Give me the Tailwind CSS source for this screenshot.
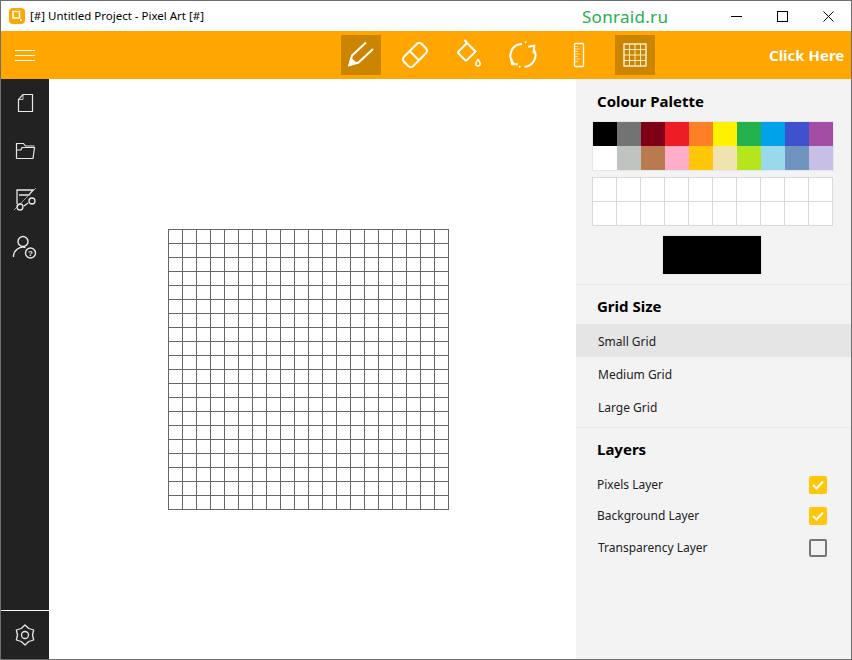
<!DOCTYPE html>
<html><head><meta charset="utf-8"><script src="https://cdn.jsdelivr.net/npm/@tailwindcss/browser@4"></script></head>
<body class="m-0 bg-white">
<div class="w-[852px] h-[660px] flex flex-col overflow-hidden border border-[#6e6e6e] font-['Noto_Sans','Open_Sans',sans-serif] text-[#222]">
  <!-- title bar -->
  <div class="h-[30px] shrink-0 flex items-center bg-white relative">
    <svg class="ml-[8px] w-[16px] h-[16px]" viewBox="0 0 16 16"><rect width="16" height="16" rx="4" fill="#ffa600"/><path d="M4 3.500h6.500v6.500H4z" fill="none" stroke="#fff" stroke-width="1.600"/><rect x="11" y="11" width="2" height="2" fill="#fff"/></svg>
    <span class="ml-[5px] text-[11.5px] text-black">[#] Untitled Project - Pixel Art [#]</span>
    <span class="ml-[378px] pt-[2px] text-[17px] text-[#22b14c] tracking-[0.3px]">Sonraid.ru</span>
    <div class="ml-auto flex h-full items-center">
      <div class="w-[46px] flex justify-center"><svg class="w-[11px] h-[11px]" viewBox="0 0 11 11"><path d="M0 5.500h11" stroke="#000"/></svg></div>
      <div class="w-[46px] flex justify-center"><svg class="w-[11px] h-[11px]" viewBox="0 0 11 11"><rect x=".5" y=".5" width="10" height="10" fill="none" stroke="#000"/></svg></div>
      <div class="w-[46px] flex justify-center"><svg class="w-[11px] h-[11px]" viewBox="0 0 11 11"><path d="M.5.5l10 10M10.500.5l-10 10" stroke="#000"/></svg></div>
    </div>
  </div>
  <!-- toolbar -->
  <div class="h-[48px] shrink-0 bg-[#ffa600] flex items-center relative">
    <svg class="ml-[14px] w-[20px] h-[11px]" viewBox="0 0 20 11"><path d="M0 .5h20M0 5.500h20M0 10.500h20" stroke="#fff"/></svg>
    <div class="ml-[306px] flex gap-[14.8px]">
      <div class="w-[40px] h-[40px] bg-[#cc8500]"><svg width="40" height="40" viewBox="0 0 40 40" fill="none" stroke="#fff" stroke-width="2"><path d="M25 7.500L11 20.500 8.500 30l9-2.500L32 14"/><path d="M8.500 30l1.500-6 4.500 3.800z" fill="#fff"/></svg></div>
      <div class="w-[40px] h-[40px]"><svg width="40" height="40" viewBox="0 0 40 40" fill="none" stroke="#fff" stroke-width="2"><g transform="translate(-1 0) rotate(-45 20 20)"><rect x="7.500" y="13.500" width="25" height="13" rx="3.500"/><path d="M19 13.500v13"/></g></svg></div>
      <div class="w-[40px] h-[40px]"><svg width="40" height="40" viewBox="0 0 40 40" fill="none" stroke="#fff" stroke-width="2"><g transform="translate(-1 0)"><path d="M14.500 5l2.500 3M17 8L8.500 16.500a1.500 1.500 0 000 2l6.500 6.500a1.500 1.500 0 002 0L25.500 16.500z"/><path d="M28 24.500c-1.500 2-2.200 3-2.200 4.200a2.200 2.200 0 004.400 0c0-1.200-.700-2.200-2.200-4.200z" stroke-width="1.500"/></g></svg></div>
      <div class="w-[40px] h-[40px]"><svg width="40" height="40" viewBox="0 0 40 40" fill="none" stroke="#fff" stroke-width="2"><path d="M17 9A11.500 11.500 0 009.600 29.300"/><path d="M28.600 14A11.500 11.500 0 0119.600 31.700"/><path d="M23.300 11.700l6-1 -.7 7.600M6.300 23.300l.7 6h6"/><circle cx="20.600" cy="7.300" r="1" fill="#fff" stroke="none"/><circle cx="14.600" cy="31.700" r="1" fill="#fff" stroke="none"/></svg></div>
      <div class="w-[40px] h-[40px]"><svg width="40" height="40" viewBox="0 0 40 40" fill="none" stroke="#fff"><rect x="14.500" y="8.500" width="9" height="23" rx="1" stroke-width="1.300"/><path d="M15 11.500h3M15 14h5M15 16.500h3M15 19h5M15 21.500h3M15 24h5M15 26.500h3" stroke-width=".8" opacity=".8"/></svg></div>
      <div class="w-[40px] h-[40px] bg-[#cc8500]"><svg width="40" height="40" viewBox="0 0 40 40" fill="none" stroke="#fff"><path d="M14.500 9v22M20 9v22M25.500 9v22M9 14.500h22M9 20h22M9 25.500h22" stroke="#ffe9bd" stroke-width="1"/><rect x="9" y="9" width="22" height="22" stroke-width="1.200"/></svg></div>
    </div>
    <span class="absolute left-[768px] top-[14px] whitespace-nowrap text-[15px] leading-[20px] font-bold text-white">Click Here</span>
  </div>
  <div class="flex-1 flex min-h-0">
    <!-- sidebar -->
    <div class="w-[48px] shrink-0 bg-[#222222] flex flex-col">
      <div class="h-[48px] flex items-center justify-center"><svg width="24" height="24" viewBox="0 0 24 24" fill="none" stroke="#e8e8e8" stroke-width="1.200"><path d="M10 3.500h9.500v17h-14V8.500z"/><path d="M10 3.500v5H5.500" stroke-width=".8"/></svg></div>
      <div class="h-[48px] flex items-center justify-center"><svg width="24" height="24" viewBox="0 0 24 24" fill="none" stroke="#e8e8e8" stroke-width="1.200"><path d="M3.500 19.500V4.500h7l2 2.500h9"/><path d="M3.500 19.500h16.500l1.500-11H9l-1 2.500H3.500"/></svg></div>
      <div class="h-[48px] flex items-center justify-center"><svg width="26" height="26" viewBox="0 0 26 26" fill="none" stroke="#e8e8e8" stroke-width="1.300"><path d="M5 18V4h16l-4 5H7"/><path d="M2 24L24 2" stroke="#c8b8c8" stroke-width=".8"/><circle cx="8" cy="21" r="3"/><circle cx="20" cy="15" r="3"/><path d="M12 20l4-3"/></svg></div>
      <div class="h-[48px] flex items-center justify-center"><svg width="26" height="26" viewBox="0 0 26 26" fill="none" stroke="#e8e8e8" stroke-width="1.400"><circle cx="11" cy="7.500" r="5"/><path d="M1.500 23a9.500 9.500 0 0112-9.500"/><circle cx="18.500" cy="19" r="5"/><text x="18.500" y="22" text-anchor="middle" font-size="8" font-weight="700" fill="#e8e8e8" stroke="none" font-family="Liberation Sans">?</text></svg></div>
      <div class="mt-auto h-[49px] border-t border-white flex items-center justify-center"><svg width="22" height="22" viewBox="0 0 22 22" fill="none" stroke="#e8e8e8" stroke-width="1.300" stroke-linejoin="round"><path d="M11 1L14.750 4.500 19.660 6 18.500 11 19.660 16 14.750 17.500 11 21 7.250 17.500 2.340 16 3.500 11 2.340 6 7.250 4.500z"/><circle cx="11" cy="11" r="3.500"/></svg></div>
    </div>
    <!-- canvas -->
    <div class="flex-1 bg-white relative">
      <div class="absolute left-[119px] top-[150px] w-[281px] h-[281px] bg-[linear-gradient(to_right,#666_1px,transparent_1px),linear-gradient(to_bottom,#666_1px,transparent_1px)] bg-[size:14px_14px]"></div>
    </div>
    <!-- right panel -->
    <div class="w-[275px] shrink-0 bg-[#f3f3f3] flex flex-col text-[12px]">
      <div class="h-[206px] border-b border-[#e6e6e6] relative shrink-0">
        <div class="pl-[21px] pt-[11px] text-[15px] leading-[22px] font-bold text-black">Colour Palette</div>
        <div class="ml-[16px] mt-[9px] w-[242px] border border-[#e6e6e6] grid grid-cols-[repeat(10,24px)] grid-rows-[repeat(2,24px)]">
          <div class="bg-[#000000]"></div><div class="bg-[#737373]"></div><div class="bg-[#7f0016]"></div><div class="bg-[#ee1c24]"></div><div class="bg-[#ff7f27]"></div><div class="bg-[#fff200]"></div><div class="bg-[#22b14c]"></div><div class="bg-[#00a2e8]"></div><div class="bg-[#3f51cc]"></div><div class="bg-[#a34ea4]"></div>
          <div class="bg-white"></div><div class="bg-[#bfc4c0]"></div><div class="bg-[#b97a50]"></div><div class="bg-[#ffaec9]"></div><div class="bg-[#ffc60a]"></div><div class="bg-[#efe4b0]"></div><div class="bg-[#b5e61d]"></div><div class="bg-[#99d9ea]"></div><div class="bg-[#7092be]"></div><div class="bg-[#c8bfe7]"></div>
        </div>
        <div class="ml-[16px] mt-[6px] w-[241px] h-[49px] grid grid-cols-[repeat(10,24px)] grid-rows-[repeat(2,24px)] border-l border-t border-[#d9d9d9] bg-white">
          <div class="border-r border-b border-[#d9d9d9]"></div><div class="border-r border-b border-[#d9d9d9]"></div><div class="border-r border-b border-[#d9d9d9]"></div><div class="border-r border-b border-[#d9d9d9]"></div><div class="border-r border-b border-[#d9d9d9]"></div><div class="border-r border-b border-[#d9d9d9]"></div><div class="border-r border-b border-[#d9d9d9]"></div><div class="border-r border-b border-[#d9d9d9]"></div><div class="border-r border-b border-[#d9d9d9]"></div><div class="border-r border-b border-[#d9d9d9]"></div>
          <div class="border-r border-b border-[#d9d9d9]"></div><div class="border-r border-b border-[#d9d9d9]"></div><div class="border-r border-b border-[#d9d9d9]"></div><div class="border-r border-b border-[#d9d9d9]"></div><div class="border-r border-b border-[#d9d9d9]"></div><div class="border-r border-b border-[#d9d9d9]"></div><div class="border-r border-b border-[#d9d9d9]"></div><div class="border-r border-b border-[#d9d9d9]"></div><div class="border-r border-b border-[#d9d9d9]"></div><div class="border-r border-b border-[#d9d9d9]"></div>
        </div>
        <div class="ml-[86px] mt-[9px] w-[100px] h-[40px] bg-black border border-[#e6e6e6]"></div>
      </div>
      <div class="h-[143px] border-b border-[#e6e6e6] shrink-0">
        <div class="pl-[21px] pt-[10px] h-[39px] text-[15px] leading-[22px] font-bold text-black">Grid Size</div>
        <div class="h-[33px] bg-[#e5e5e5] pl-[22px] pt-[3px] flex items-center">Small Grid</div>
        <div class="h-[33px] pl-[22px] pt-[3px] flex items-center">Medium Grid</div>
        <div class="h-[33px] pl-[22px] pt-[3px] flex items-center">Large Grid</div>
      </div>
      <div class="pl-[21px] pr-[24px]">
        <div class="pt-[10px] h-[41px] text-[15px] leading-[22px] font-bold text-black">Layers</div>
        <div class="h-[31px] flex items-center justify-between"><span>Pixels Layer</span><span class="w-[18px] h-[18px] rounded-[2px] bg-[#ffc60a] flex items-center justify-center"><svg width="12" height="10" viewBox="0 0 12 10"><path d="M1 5l3.500 3.500L11 1.500" fill="none" stroke="#fff" stroke-width="2"/></svg></span></div>
        <div class="h-[32px] flex items-center justify-between"><span>Background Layer</span><span class="w-[18px] h-[18px] rounded-[2px] bg-[#ffc60a] flex items-center justify-center"><svg width="12" height="10" viewBox="0 0 12 10"><path d="M1 5l3.500 3.500L11 1.500" fill="none" stroke="#fff" stroke-width="2"/></svg></span></div>
        <div class="h-[31px] flex items-center justify-between"><span class="pl-[1px]">Transparency Layer</span><span class="w-[18px] h-[18px] rounded-[2px] border-2 border-[#767676]"></span></div>
      </div>
    </div>
  </div>
</div>
</body></html>
